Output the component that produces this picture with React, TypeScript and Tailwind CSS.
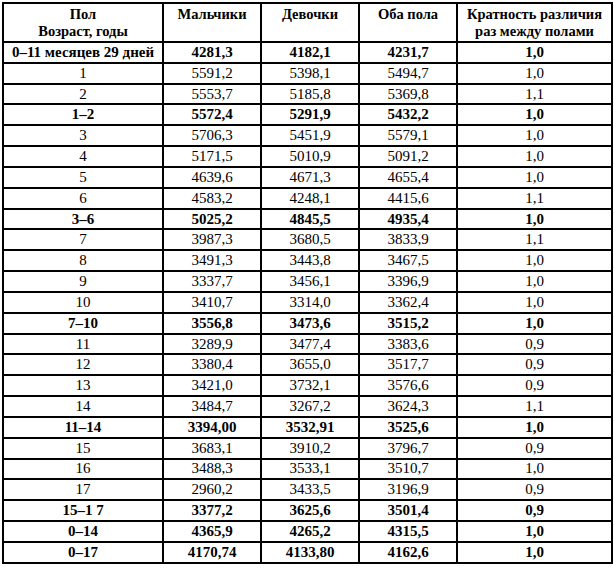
const rows: [string, string, string, string, string, boolean][] = [
  ["0–11 месяцев 29 дней", "4281,3", "4182,1", "4231,7", "1,0", true],
  ["1", "5591,2", "5398,1", "5494,7", "1,0", false],
  ["2", "5553,7", "5185,8", "5369,8", "1,1", false],
  ["1–2", "5572,4", "5291,9", "5432,2", "1,0", true],
  ["3", "5706,3", "5451,9", "5579,1", "1,0", false],
  ["4", "5171,5", "5010,9", "5091,2", "1,0", false],
  ["5", "4639,6", "4671,3", "4655,4", "1,0", false],
  ["6", "4583,2", "4248,1", "4415,6", "1,1", false],
  ["3–6", "5025,2", "4845,5", "4935,4", "1,0", true],
  ["7", "3987,3", "3680,5", "3833,9", "1,1", false],
  ["8", "3491,3", "3443,8", "3467,5", "1,0", false],
  ["9", "3337,7", "3456,1", "3396,9", "1,0", false],
  ["10", "3410,7", "3314,0", "3362,4", "1,0", false],
  ["7–10", "3556,8", "3473,6", "3515,2", "1,0", true],
  ["11", "3289,9", "3477,4", "3383,6", "0,9", false],
  ["12", "3380,4", "3655,0", "3517,7", "0,9", false],
  ["13", "3421,0", "3732,1", "3576,6", "0,9", false],
  ["14", "3484,7", "3267,2", "3624,3", "1,1", false],
  ["11–14", "3394,00", "3532,91", "3525,6", "1,0", true],
  ["15", "3683,1", "3910,2", "3796,7", "0,9", false],
  ["16", "3488,3", "3533,1", "3510,7", "1,0", false],
  ["17", "2960,2", "3433,5", "3196,9", "0,9", false],
  ["15–1 7", "3377,2", "3625,6", "3501,4", "0,9", true],
  ["0–14", "4365,9", "4265,2", "4315,5", "1,0", true],
  ["0–17", "4170,74", "4133,80", "4162,6", "1,0", true],
];

export default function App() {
  const cell = "border-2 border-black text-center align-middle p-0 leading-none";
  const head = "border-2 border-black text-center align-top px-0 pt-[2px] font-bold text-[14.5px] leading-[17px]";
  return (
    <div className="w-[614px] h-[568px] bg-white pt-[2px] pl-[2px]" style={{ fontFamily: '"Liberation Serif", "DejaVu Serif", serif' }}>
      <table className="table-fixed border-collapse w-[609px] text-black text-[15px]">
        <colgroup>
          <col className="w-[160px]" />
          <col className="w-[98px]" />
          <col className="w-[98px]" />
          <col className="w-[98px]" />
          <col className="w-[155px]" />
        </colgroup>
        <thead>
          <tr className="h-[39px]">
            <th className={head}>
              <div>Пол</div>
              <div>Возраст, годы</div>
            </th>
            <th className={head}>Мальчики</th>
            <th className={head}>Девочки</th>
            <th className={head}>Оба пола</th>
            <th className={head}>
              <div>Кратность различия</div>
              <div>раз между полами</div>
            </th>
          </tr>
        </thead>
        <tbody>
          {rows.map((r) => (
            <tr key={r[0]} className={`h-[20.84px] ${r[5] ? "font-bold" : ""}`}>
              <td className={cell}>{r[0]}</td>
              <td className={cell}>{r[1]}</td>
              <td className={cell}>{r[2]}</td>
              <td className={cell}>{r[3]}</td>
              <td className={cell}>{r[4]}</td>
            </tr>
          ))}
        </tbody>
      </table>
    </div>
  );
}
